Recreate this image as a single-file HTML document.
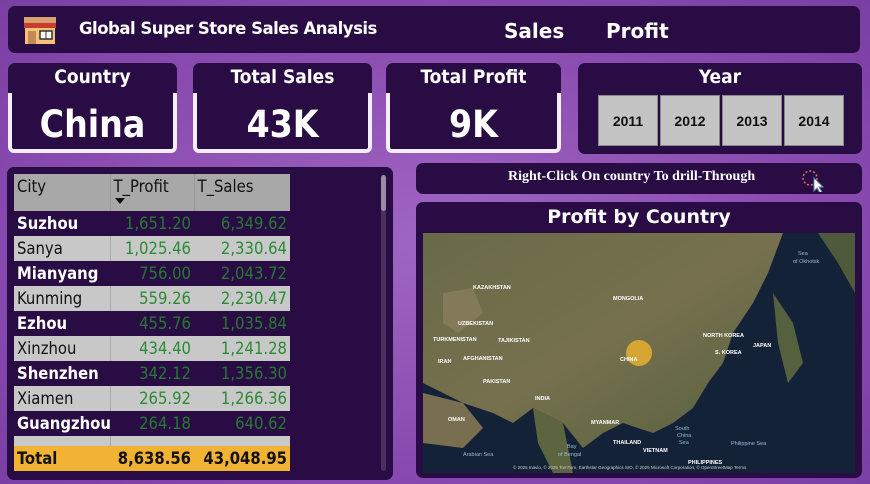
<!DOCTYPE html>
<html><head><style>
*{margin:0;padding:0;box-sizing:border-box}
body{width:870px;height:484px;overflow:hidden;position:relative;background:radial-gradient(ellipse at 50% 50%,#a066c4 0%,#8a4cb0 60%,#7a3fa3 100%);font-family:"DejaVu Sans","Liberation Sans",sans-serif}
.p{position:absolute;background:#2a0c45;border-radius:7px}
.kh{position:absolute;color:#fff;font-weight:bold;font-size:19px;text-align:center;width:100%;top:3px;font-family:"DejaVu Sans Condensed","DejaVu Sans",sans-serif}
.kb{position:absolute;left:0;right:0;top:30px;bottom:0;border:4px solid #f4eef8;border-top:none;border-radius:0 0 6px 6px;color:#fff;font-weight:bold;font-size:37px;text-align:center;line-height:64px;font-family:"DejaVu Sans Condensed","DejaVu Sans",sans-serif}
.yb{position:absolute;top:32px;width:60px;height:51px;background:#c4c4c4;border:1px solid #888;color:#111;font-weight:bold;font-size:14px;text-align:center;line-height:51px;font-family:"Liberation Sans",sans-serif}
table{position:absolute;left:14px;top:174px;width:276px;table-layout:fixed;border-collapse:collapse;font-size:16.5px;font-family:"DejaVu Sans Condensed","DejaVu Sans",sans-serif}
td{height:25px;padding:0 3px;white-space:nowrap;overflow:hidden}
td.n{text-align:right;color:#2f8f3a}
tr.d td{color:#fff;font-weight:bold}
tr.d td.n{color:#237a30;font-weight:normal}
tr.l td{background:#c8c8c8;color:#111}
tr.l td.n{color:#2b8a36}
tr.l td:first-child{border-right:1px solid #aaa}
</style></head><body>
<div class="p" style="left:8px;top:6px;width:852px;height:47px">
 <svg style="position:absolute;left:14px;top:9px" width="36" height="30" viewBox="0 0 36 30"><rect x="2" y="2" width="32" height="6" fill="#d9a070"/><rect x="2" y="8" width="32" height="5" fill="#c73d2e"/><rect x="3" y="13" width="30" height="16" fill="#f6c27a"/><rect x="6" y="16" width="8" height="13" fill="#c48a55"/><rect x="18" y="16" width="12" height="8" fill="#fff" stroke="#333" stroke-width="1.5"/><line x1="24" y1="16" x2="24" y2="24" stroke="#333"/></svg>
 <div style="position:absolute;left:71px;top:13px;color:#fff;font-weight:bold;font-size:16.5px;letter-spacing:-0.5px">Global Super Store Sales Analysis</div>
 <div style="position:absolute;left:496px;top:13px;color:#fff;font-weight:bold;font-size:20px">Sales</div>
 <div style="position:absolute;left:598px;top:13px;color:#fff;font-weight:bold;font-size:20px">Profit</div>
</div>
<div class="p" style="left:8px;top:63px;width:169px;height:90px"><div class="kh">Country</div><div class="kb">China</div></div>
<div class="p" style="left:193px;top:63px;width:179px;height:90px"><div class="kh">Total Sales</div><div class="kb">43K</div></div>
<div class="p" style="left:386px;top:63px;width:175px;height:90px"><div class="kh">Total Profit</div><div class="kb">9K</div></div>
<div class="p" style="left:578px;top:63px;width:284px;height:91px"><div class="kh">Year</div>
 <div class="yb" style="left:20px">2011</div><div class="yb" style="left:82px">2012</div><div class="yb" style="left:144px">2013</div><div class="yb" style="left:206px">2014</div></div>
<div class="p" style="left:7px;top:167px;width:386px;height:313px"><div style="position:absolute;left:374px;top:8px;width:5px;height:296px;background:#4a3060;border-radius:3px"><div style="height:36px;background:#9a8aa8;border-radius:3px"></div></div></div>
<table>
<colgroup><col style="width:96px"><col style="width:84px"><col style="width:96px"></colgroup>
<tr style="background:#a8a8a8"><td style="height:37px;vertical-align:top;padding-top:3px;color:#111;border-right:1px solid #999">City</td><td style="vertical-align:top;padding-top:3px;color:#111;border-right:1px solid #999;position:relative">T_Profit<div style="position:absolute;left:4px;top:24px;border:5px solid transparent;border-top:6px solid #111"></div></td><td style="vertical-align:top;padding-top:3px;color:#111">T_Sales</td></tr>
<tr class="d"><td>Suzhou</td><td class="n">1,651.20</td><td class="n">6,349.62</td></tr>
<tr class="l"><td>Sanya</td><td class="n">1,025.46</td><td class="n">2,330.64</td></tr>
<tr class="d"><td>Mianyang</td><td class="n">756.00</td><td class="n">2,043.72</td></tr>
<tr class="l"><td>Kunming</td><td class="n">559.26</td><td class="n">2,230.47</td></tr>
<tr class="d"><td>Ezhou</td><td class="n">455.76</td><td class="n">1,035.84</td></tr>
<tr class="l"><td>Xinzhou</td><td class="n">434.40</td><td class="n">1,241.28</td></tr>
<tr class="d"><td>Shenzhen</td><td class="n">342.12</td><td class="n">1,356.30</td></tr>
<tr class="l"><td>Xiamen</td><td class="n">265.92</td><td class="n">1,266.36</td></tr>
<tr class="d"><td>Guangzhou</td><td class="n">264.18</td><td class="n">640.62</td></tr>
<tr class="l"><td style="height:10px"></td><td class="n" style="height:10px"></td><td class="n" style="height:10px"></td></tr>
<tr style="background:#f2b233"><td style="color:#111;font-weight:bold">Total</td><td class="n" style="color:#111;font-weight:bold">8,638.56</td><td class="n" style="color:#111;font-weight:bold">43,048.95</td></tr>
</table>
<div class="p" style="left:416px;top:163px;width:446px;height:31px"><div style="position:absolute;left:92px;top:6px;color:#fff;font-weight:bold;font-size:14px;font-family:'Liberation Serif',serif">Right-Click On country To drill-Through</div>
<svg style="position:absolute;left:384px;top:5px" width="30" height="24"><circle cx="10" cy="10" r="7" fill="none" stroke="#e07050" stroke-width="1.5" stroke-dasharray="2 2"/><path d="M14 10 L14 23 L17 20 L20 25 L22 24 L19 19 L23 19 Z" fill="#fff" stroke="#68a" stroke-width="1"/></svg></div>
<div class="p" style="left:416px;top:202px;width:446px;height:276px"><div style="position:absolute;width:100%;text-align:center;top:4px;color:#fff;font-weight:bold;font-size:19px">Profit by Country</div></div>
<svg style="position:absolute;left:423px;top:233px" width="432" height="240" viewBox="0 0 432 240">
<defs><linearGradient id="g" x1="0" y1="0" x2="1" y2="1"><stop offset="0" stop-color="#6a6a48"/><stop offset=".5" stop-color="#76704e"/><stop offset="1" stop-color="#55603e"/></linearGradient></defs>
<rect width="432" height="240" fill="#142238"/>
<path d="M0 0 H360 L345 40 L330 70 L310 100 L300 130 L285 150 L270 175 L250 190 L230 200 L200 190 L180 200 L160 215 L140 190 L110 175 L90 190 L70 180 L40 170 L20 160 L0 150 Z" fill="url(#g)"/>
<path d="M350 60 L370 90 L380 130 L365 150 L355 110 Z" fill="#55603e"/>
<path d="M395 0 L432 0 L432 60 L415 30 Z" fill="#4e5a3a"/>
<path d="M0 160 L40 170 L60 195 L40 215 L0 210 Z" fill="#7a6e50"/>
<path d="M110 175 L140 190 L150 240 L130 240 L115 210 Z" fill="#5d6440"/>
<path d="M20 60 L50 55 L60 80 L35 100 L20 90Z" fill="#8a8060" opacity=".7"/>
<circle cx="216" cy="120" r="13" fill="#e8b030" opacity=".85"/>
<g fill="#fff" font-family="Liberation Sans,sans-serif" font-size="5.5" font-weight="bold">
<text x="50" y="56">KAZAKHSTAN</text><text x="190" y="67">MONGOLIA</text><text x="35" y="92">UZBEKISTAN</text><text x="10" y="108">TURKMENISTAN</text><text x="75" y="109">TAJIKISTAN</text><text x="15" y="130">IRAN</text><text x="40" y="127">AFGHANISTAN</text><text x="60" y="150">PAKISTAN</text><text x="112" y="167">INDIA</text><text x="25" y="188">OMAN</text><text x="168" y="191">MYANMAR</text><text x="190" y="211">THAILAND</text><text x="220" y="219">VIETNAM</text><text x="265" y="231">PHILIPPINES</text><text x="280" y="104">NORTH KOREA</text><text x="292" y="121">S. KOREA</text><text x="330" y="114">JAPAN</text><text x="197" y="128">CHINA</text></g>
<g fill="#9ab8d8" font-family="Liberation Sans,sans-serif" font-size="5.5"><text x="375" y="22">Sea</text><text x="370" y="30">of Okhotsk</text><text x="252" y="197">South</text><text x="254" y="204">China</text><text x="256" y="211">Sea</text><text x="308" y="212">Philippine Sea</text><text x="144" y="215">Bay</text><text x="135" y="223">of Bengal</text><text x="40" y="223">Arabian Sea</text></g>
<text x="90" y="236" fill="#ccc" font-size="4.5" font-family="Liberation Sans,sans-serif">© 2025 Inavio, © 2025 TomTom, Earthstar Geographics SIO, © 2025 Microsoft Corporation, © OpenStreetMap  Terms</text>
</svg>
</body></html>
